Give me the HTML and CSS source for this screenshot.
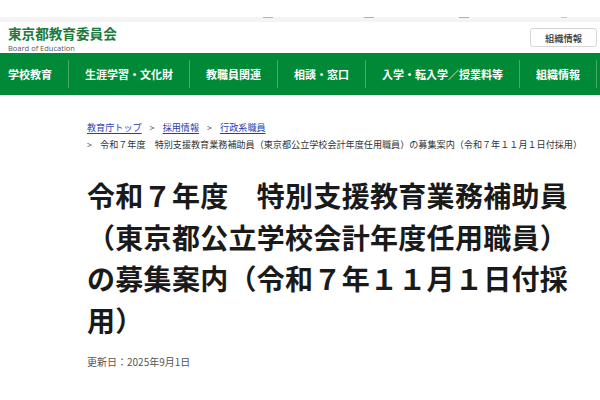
FILE: index.html
```html
<!DOCTYPE html>
<html lang="ja">
<head>
<meta charset="utf-8">
<title>特別支援教育業務補助員の募集案内</title>
<link rel="stylesheet" href="styles.css">
</head>
<body>
<div class="topbar">
  <div class="topbar-space"></div>
  <div class="topbar-strip">
    <span class="mark m1"></span>
    <span class="mark m2"></span>
    <span class="mark m3"></span>
    <span class="mark m4"></span>
  </div>
</div>
<header class="header">
  <div class="logo">
    <div class="logo-ja">東京都教育委員会</div>
    <div class="logo-en">Board of Education</div>
  </div>
  <a class="org-btn" href="#">組織情報</a>
</header>
<nav class="gnav">
  <a class="gnav-item first" href="#">学校教育</a>
  <a class="gnav-item" href="#">生涯学習・文化財</a>
  <a class="gnav-item" href="#">教職員関連</a>
  <a class="gnav-item" href="#">相談・窓口</a>
  <a class="gnav-item" href="#">入学・転入学／授業料等</a>
  <a class="gnav-item" href="#">組織情報</a>
</nav>
<main class="main">
  <div class="crumbs">
    <div class="crumb-row">
      <a href="#">教育庁トップ</a><span class="sep">&gt;</span><a href="#">採用情報</a><span class="sep">&gt;</span><a href="#">行政系職員</a>
    </div>
    <div class="crumb-row current">
      <span class="sep first">&gt;</span>令和７年度　特別支援教育業務補助員（東京都公立学校会計年度任用職員）の募集案内（令和７年１１月１日付採用）
    </div>
  </div>
  <h1 class="title">令和７年度　特別支援教育業務補助員（東京都公立学校会計年度任用職員）の募集案内（令和７年１１月１日付採用）</h1>
  <p class="updated">更新日：2025年9月1日</p>
</main>
</body>
</html>
```

FILE: styles.css
```css
* { box-sizing: border-box; }
html, body { margin: 0; padding: 0; background: #fff; }
body {
  font-family: "Noto Sans CJK JP", "Noto Sans", sans-serif;
  color: #222;
  width: 600px;
  overflow: hidden;
}
a { text-decoration: none; color: inherit; }

.topbar-space { height: 17px; background: #fff; }
.topbar-strip {
  height: 5px;
  background: #f4f4f4;
  display: flex;
  align-items: flex-start;
}
.mark { display: block; height: 1px; width: 10px; background: #8cc79f; }
.m1 { margin-left: 263px; }
.m2 { margin-left: 91px; }
.m3 { margin-left: 85px; }
.m4 { margin-left: 92px; width: 6px; background: #c9c9c9; }

.header {
  height: 31px;
  display: flex;
  justify-content: space-between;
  align-items: flex-start;
  padding: 0 3px 0 8px;
}
.logo { padding-top: 4px; }
.logo-ja {
  font-size: 13.6px;
  font-weight: 700;
  color: #1c7b3c;
  line-height: 14px;
}
.logo-en {
  font-family: "Open Sans", "Noto Sans", sans-serif;
  font-size: 7.5px;
  color: #555;
  line-height: 11px;
  margin-top: 2.5px;
}
.org-btn {
  margin-top: 6px;
  width: 67px;
  height: 19px;
  border: 1px solid #d6d6d6;
  border-radius: 3px;
  font-size: 9.3px;
  font-weight: 500;
  color: #333;
  display: flex;
  align-items: center;
  justify-content: center;
  background: #fff;
}

.gnav {
  height: 42px;
  background: #008a38;
  display: flex;
  align-items: center;
}
.gnav-item {
  color: #fff;
  font-size: 11px;
  font-weight: 700;
  line-height: 28px;
  padding: 0 16px;
  border-right: 1px solid #4aa76a;
  white-space: nowrap;
}
.gnav-item.first { padding-left: 8px; }

.main { padding: 0 25px 0 87px; }

.crumbs { padding-top: 24px; font-size: 9.1px; line-height: 17px; color: #333; }
.crumb-row { white-space: nowrap; }
.crumb-row a { color: #2440b0; text-decoration: underline; text-underline-offset: 2px; }
.sep { display: inline-block; margin: 0 8px; color: #555; }
.sep.first { margin: 0 8px 0 0; }

.title {
  margin: 22px 0 0;
  font-size: 28px;
  font-weight: 700;
  line-height: 41.5px;
  letter-spacing: 0.3px;
  color: #1a1a1a;
}
.updated {
  margin: 13px 0 0;
  font-size: 10px;
  line-height: 15px;
  color: #555;
}
```
